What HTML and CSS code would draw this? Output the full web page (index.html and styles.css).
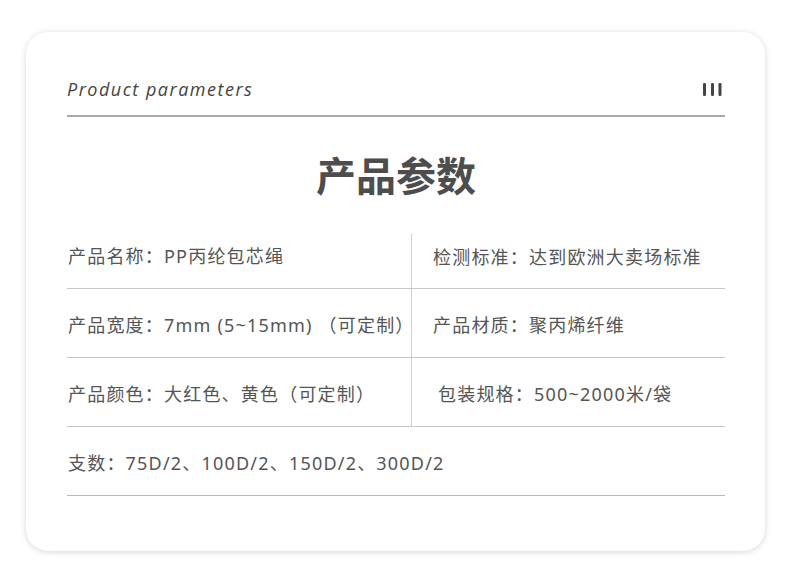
FILE: index.html
```html
<!DOCTYPE html>
<html lang="zh">
<head>
<meta charset="utf-8">
<link rel="stylesheet" href="styles.css">
</head>
<body>
<div class="card">
  <div class="head">
    <span class="head-title">Product parameters</span>
    <svg class="bars" width="20" height="14" viewBox="0 0 20 14"><rect x="0" y="0" width="3" height="13" rx="1.2"/><rect x="8" y="0" width="3" height="13" rx="1.2"/><rect x="15.5" y="0" width="3" height="13" rx="1.2"/></svg>
  </div>
  <h1 class="title">产品参数</h1>
  <div class="table">
    <div class="row">
      <div class="cell left">产品名称：PP丙纶包芯绳</div>
      <div class="cell right first">检测标准：达到欧洲大卖场标准</div>
    </div>
    <div class="row">
      <div class="cell left">产品宽度：7mm (5~15mm) （可定制）</div>
      <div class="cell right">产品材质：聚丙烯纤维</div>
    </div>
    <div class="row">
      <div class="cell left">产品颜色：大红色、黄色（可定制）</div>
      <div class="cell right indent">包装规格：500~2000米/袋</div>
    </div>
    <div class="row">
      <div class="cell full">支数：75D/2、100D/2、150D/2、300D/2</div>
    </div>
  </div>
</div>
</body>
</html>
```
FILE: styles.css
```css
html, body { margin: 0; padding: 0; background: #fff; }
body { width: 790px; height: 583px; overflow: hidden; font-family: "Noto Sans", "Noto Sans CJK SC", sans-serif; }
.card {
  margin: 32px 0 0 26px;
  width: 739px;
  height: 519px;
  box-sizing: border-box;
  padding: 0 40px 0 41px;
  background: #fff;
  border-radius: 22px;
  box-shadow: 0 1px 6px rgba(0,0,0,0.16);
}
.head {
  height: 85px;
  box-sizing: border-box;
  display: flex;
  justify-content: space-between;
  align-items: flex-end;
  padding-bottom: 15px;
  border-bottom: 2px solid #a9a9a9;
}
.head-title {
  font-family: "Open Sans", sans-serif;
  font-style: italic;
  font-size: 18px;
  letter-spacing: 1.5px;
  color: #444;
  line-height: 22px;
  padding-left: 0;
}
.bars { fill: #444; margin-right: 2px; margin-bottom: 3px; }
.title {
  margin: 0;
  height: 103px;
  box-sizing: border-box;
  padding-top: 12px;
  line-height: 90px;
  text-align: center;
  font-family: "Noto Sans CJK SC", sans-serif;
  font-size: 40px;
  font-weight: 700;
  color: #4d4d4d;
  letter-spacing: 0;
}
.row {
  display: flex;
  height: 69px;
  box-sizing: border-box;
  border-bottom: 1px solid #c8c8c8;
}
.row:last-child { border-bottom-color: #b8b8b8; }
.cell {
  font-size: 18px;
  letter-spacing: 1.2px;
  color: #555;
  line-height: 68px;
  padding-top: 2px;
  box-sizing: border-box;
  white-space: nowrap;
}
.left { width: 344px; padding-left: 1px; }
.right { flex: 1; border-left: 1px solid #d0d0d0; padding-left: 21px; }
.right.first { margin-top: 14px; padding-top: 0; line-height: 46px; }
.right.indent { padding-left: 26px; }
.full { padding-left: 1px; }
```
